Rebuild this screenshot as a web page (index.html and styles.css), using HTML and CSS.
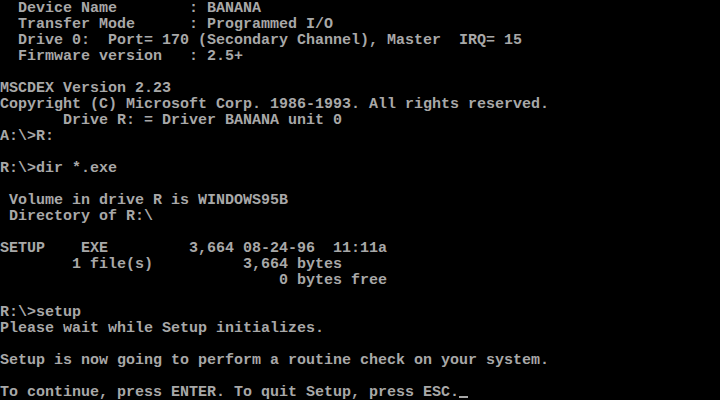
FILE: index.html
```html
<!DOCTYPE html>
<html lang="en">

<head>
    <meta charset="UTF-8">
    <title>MS-DOS - Setup</title>
    <link rel="stylesheet" href="styles.css">
</head>

<body>
    <pre class="screen">  Device Name        : BANANA
  Transfer Mode      : Programmed I/O
  Drive 0:  Port= 170 (Secondary Channel), Master  IRQ= 15
  Firmware version   : 2.5+

MSCDEX Version 2.23
Copyright (C) Microsoft Corp. 1986-1993. All rights reserved.
       Drive R: = Driver BANANA unit 0
A:\>R:

R:\>dir *.exe

 Volume in drive R is WINDOWS95B
 Directory of R:\

SETUP    EXE         3,664 08-24-96  11:11a
        1 file(s)          3,664 bytes
                               0 bytes free

R:\>setup
Please wait while Setup initializes.

Setup is now going to perform a routine check on your system.

To continue, press ENTER. To quit Setup, press ESC.<span class="cursor"></span></pre>
</body>

</html>
```
FILE: styles.css
```css
html,
body {
    margin: 0;
    padding: 0;
    background-color: #000;
    height: 100%;
    overflow: hidden;
}

.screen {
    margin: 0;
    padding: 1px 0 0 0;
    color: #a8a8a8;
    font-family: "Liberation Mono", monospace;
    font-weight: bold;
    font-size: 15px;
    line-height: 16px;
    white-space: pre;
}

.cursor {
    display: inline-block;
    width: 9px;
    height: 16px;
    vertical-align: top;
    box-sizing: border-box;
    border-bottom: 2px solid #a8a8a8;
    margin-top: -3px;
}
```
